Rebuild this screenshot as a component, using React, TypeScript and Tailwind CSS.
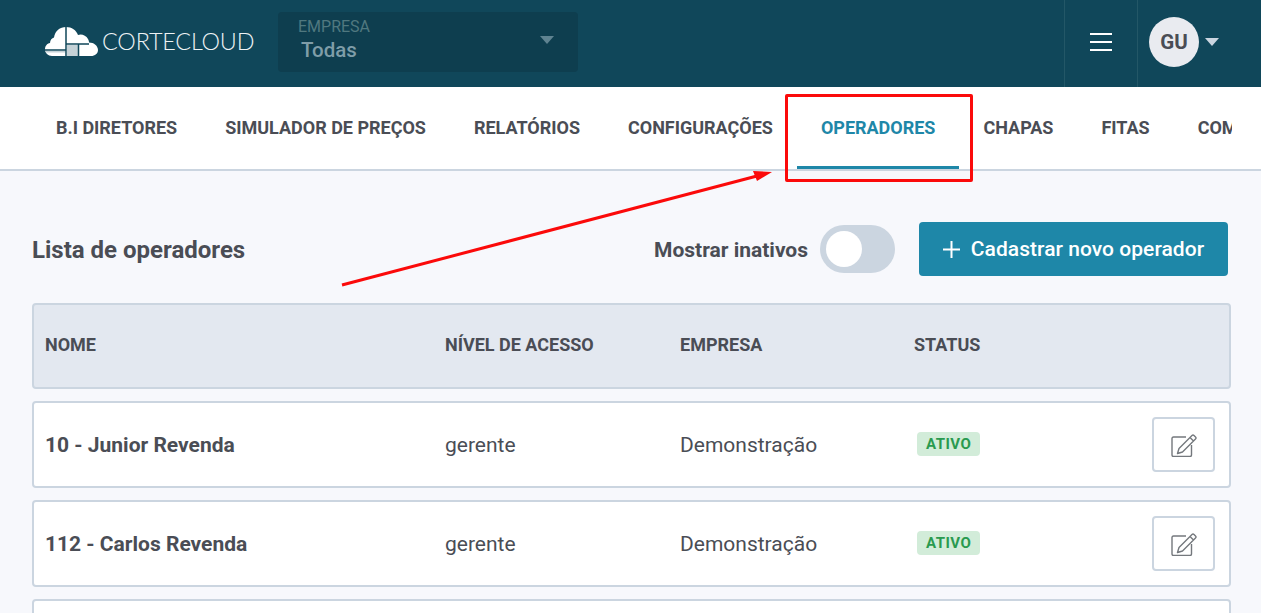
import React from "react";

const tabs = ["B.I DIRETORES", "SIMULADOR DE PREÇOS", "RELATÓRIOS", "CONFIGURAÇÕES", "OPERADORES", "CHAPAS", "FITAS", "COMPONENTES"];

const operators = [
  { name: "10 - Junior Revenda", level: "gerente", company: "Demonstração" },
  { name: "112 - Carlos Revenda", level: "gerente", company: "Demonstração" },
];

const CloudLogo = () => (
  <svg width="53" height="29" viewBox="0 0 53 29" className="shrink-0">
    <path
      fill="#ffffff"
      d="M7 29 C3 29 0 26 0 22.500 C0 19 2 16.500 5 16 C5 13 7 11 9 10.500 C10 4 15 0 21 0 C27 0 31 3 33 8 C36 6.500 41 8 43 12 C44 14 44 15 44 15.500 C49 15.500 53 19 53 23 C53 26.500 50 29 46 29 Z"
    />
    <path fill="#c5d2d7" d="M22 18 H33 V29 H22 Z M1 24 H20.500 V25.500 H1 Z" />
    <path stroke="#10475a" strokeWidth="1.5" fill="none" d="M21 0 V29 M21 17 H44 M0 23 H21 M33.500 17 V29" />
  </svg>
);

const EditIcon = () => (
  <svg width="26" height="24" viewBox="0 0 26 24" fill="none" stroke="#74787d" strokeWidth="1.4">
    <path d="M15 4 H2.500 Q1 4 1 5.500 V22 Q1 23.500 2.500 23.500 H19 Q20.500 23.500 20.500 22 V12" />
    <path d="M21 2.500 Q22 1.500 23 2.500 L24.500 4 Q25.500 5 24.500 6 L11.500 19 L6.500 20.500 L8 15.500 Z M19 4.500 L23 8.500" strokeLinejoin="round" />
  </svg>
);

const App = () => {
  return (
    <div className="relative h-[613px] overflow-hidden bg-[#f7f8fc] font-['Roboto',sans-serif] text-[#4a4d55]">
      <header className="flex h-[87px] items-stretch bg-[#10475a]">
        <div className="flex w-[278px] items-center gap-[4px] pb-[4px] pl-[45px]">
          <CloudLogo />
          <span className="font-['Lato',sans-serif] text-[23.4px] font-light tracking-[-0.2px] text-[#eef3f5]">CORTECLOUD</span>
        </div>
        <div className="mt-3 flex h-[60px] w-[300px] items-center justify-between rounded bg-[#0e3e4f] pl-5 pr-6">
          <div className="flex flex-col pb-[3px]">
            <span className="text-[16px] leading-[18px] text-[#50787f]">EMPRESA</span>
            <span className="pl-[3px] text-[20.5px] font-medium leading-[28px] text-[#7f9da8]">Todas</span>
          </div>
          <div className="mb-1 h-0 w-0 border-x-[7px] border-t-[8px] border-x-transparent border-t-[#5f8391]" />
        </div>
        <div className="flex-1" />
        <div className="flex w-[74px] items-center justify-center border-x border-[#235767] pb-[3px]">
          <div className="flex w-[22px] flex-col gap-[6px]">
            <div className="h-[2px] bg-white" />
            <div className="h-[2px] bg-white" />
            <div className="h-[2px] bg-white" />
          </div>
        </div>
        <div className="flex w-[123px] items-center pb-[3px] pl-[11px]">
          <div className="flex h-[50px] w-[50px] items-center justify-center rounded-full bg-[#e9ebf0] text-[20.5px] font-bold text-[#4a4d55]">
            GU
          </div>
          <div className="ml-[6px] h-0 w-0 border-x-[7px] border-t-[8px] border-x-transparent border-t-[#cbd5e0]" />
        </div>
      </header>

      <nav className="h-[84px] border-b-2 border-[#cbd5e0] bg-white pl-8 pr-[29px]">
        <div className="flex h-full overflow-hidden">
          {tabs.map((tab) => (
            <div
              key={tab}
              className={
                tab === "OPERADORES"
                  ? "flex shrink-0 items-start whitespace-nowrap border-b-[3px] border-[#1e87a8] px-6 pt-[31px] text-[18px] font-bold leading-5 tracking-[-0.01px] text-[#1e87a8]"
                  : "flex shrink-0 items-start whitespace-nowrap px-6 pt-[31px] text-[18px] font-bold leading-5 tracking-[-0.01px] text-[#4a4d55]"
              }
            >
              {tab}
            </div>
          ))}
        </div>
      </nav>

      <main className="px-8">
        <div className="flex h-[132px] items-start justify-between pr-[1px] pt-[51px]">
          <h1 className="pt-[12px] text-[24px] font-bold leading-8">Lista de operadores</h1>
          <div className="flex items-center">
            <span className="pt-[4px] text-[21px] font-bold">Mostrar inativos</span>
            <div className="ml-3 flex h-12 w-[75px] items-center rounded-full bg-[#cbd5e0] pl-[6px]">
              <div className="h-9 w-9 rounded-full bg-white" />
            </div>
            <button className="ml-6 flex h-[54px] w-[309px] items-center justify-center gap-[11px] rounded bg-[#1e87a8] text-[21px] font-medium tracking-[0.04px] text-white">
              <svg width="17" height="17" viewBox="0 0 17 17" stroke="#ffffff" strokeWidth="2">
                <path d="M8.500 0 V17 M0 8.500 H17" />
              </svg>
              <span className="pt-[2px]">Cadastrar novo operador</span>
            </button>
          </div>
        </div>

        <div className="flex w-[1199px] flex-col gap-3">
          <div className="grid h-[86px] grid-cols-[400px_235px_234px_1fr] items-center rounded border-2 border-[#cbd5e0] bg-[#e3e8f0] px-[11px] text-[18px] font-bold">
            <span className="pb-[4px]">NOME</span>
            <span className="pb-[4px]">NÍVEL DE ACESSO</span>
            <span className="pb-[4px]">EMPRESA</span>
            <span className="pb-[4px]">STATUS</span>
          </div>
          {operators.map((op) => (
            <div
              key={op.name}
              className="grid h-[87px] grid-cols-[400px_235px_234px_1fr] items-center rounded border-2 border-[#cbd5e0] bg-white pl-[11px] pr-[14px] text-[21px]"
            >
              <span className="pt-[2px] font-bold">{op.name}</span>
              <span className="pt-[2px]">{op.level}</span>
              <span className="pt-[2px]">{op.company}</span>
              <div className="flex items-center justify-between">
                <span className="mb-[2px] ml-[3px] rounded bg-[#d2ecd9] px-[9px] py-[3px] text-[15px] font-bold leading-[18px] tracking-[0.5px] text-[#2a9a4f]">
                  ATIVO
                </span>
                <button className="flex h-[55px] w-[63px] items-center justify-center rounded border-2 border-[#cbd5e0] bg-white">
                  <EditIcon />
                </button>
              </div>
            </div>
          ))}
          <div className="h-[87px] rounded border-2 border-[#cbd5e0] bg-white" />
        </div>
      </main>

      {/* annotation drawn on top of the screenshot */}
      <div className="absolute left-[785px] top-[94px] h-[88px] w-[188px] rounded-[2px] border-[3px] border-[#fb0a0a]" />
      <svg className="absolute left-0 top-0" width="1261" height="613" fill="none">
        <path d="M342 285 L757 176" stroke="#fb0a0a" strokeWidth="3" />
        <path d="M772 172 L753 171 L757 181 Z" fill="#fb0a0a" />
      </svg>
    </div>
  );
};

export default App;
